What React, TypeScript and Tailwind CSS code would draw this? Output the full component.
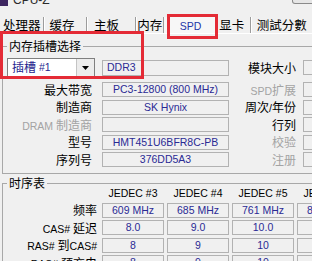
import React from "react";

const CJK = /([\u3400-\u9fff\uf900-\ufaff]+)/;

function Mixed({ text, big = false }: { text: string; big?: boolean }) {
  const parts = text.split(CJK).filter((p) => p.length > 0);
  return (
    <>
      {parts.map((p, i) =>
        /[\u3400-\u9fff\uf900-\ufaff]/.test(p) ? (
          <span key={i} className={big ? "text-[12.5px]" : "text-[12px]"}>
            {p}
          </span>
        ) : (
          <span key={i} className="text-[10.5px]">
            {p}
          </span>
        )
      )}
    </>
  );
}

function Field({ text = "", className = "" }: { text?: string; className?: string }) {
  return (
    <div
      className={
        "h-[15px] border border-[#b2b2b2] flex items-center justify-center text-[#2a2a94] whitespace-nowrap overflow-hidden " +
        className
      }
    >
      <Mixed text={text} />
    </div>
  );
}

function Label({ text, gray = false, className = "" }: { text: string; gray?: boolean; className?: string }) {
  return (
    <div
      className={
        "text-right whitespace-nowrap " + (gray ? "text-[#a3a3a3] " : "text-black ") + className
      }
    >
      <Mixed text={text} />
    </div>
  );
}

const tabs = [
  { t: "处理器", c: "w-[45px] pl-[3px] border-r border-[#9c9c9c]" },
  { t: "缓存", c: "w-[43px] pl-[5px] border-r border-[#9c9c9c]" },
  { t: "主板", c: "w-[50px] pl-[7px] border-r border-[#9c9c9c]" },
  { t: "内存", c: "w-[28px] pl-[1px] border-r border-[#9c9c9c]" },
  { t: "SPD", c: "w-[54px] justify-center text-[#2436a8] bg-[#f7f7f7]" },
  { t: "显卡", c: "w-[34px] pl-[2px] border-r border-[#9c9c9c]" },
  { t: "测試分數", c: "w-[62px] pl-[6px]" },
];

const rows: [string, boolean, string, string, boolean][] = [
  ["最大带宽", false, "PC3-12800 (800 MHz)", "SPD扩展", true],
  ["制造商", false, "SK Hynix", "周次/年份", false],
  ["DRAM 制造商", true, "", "行列", false],
  ["型号", false, "HMT451U6BFR8C-PB", "校验", true],
  ["序列号", false, "376DD5A3", "注册", true],
];

const timings: [string, string[]][] = [
  ["频率", ["609 MHz", "685 MHz", "761 MHz", "838 MHz"]],
  ["CAS# 延迟", ["8.0", "9.0", "10.0", "11.0"]],
  ["RAS# 到CAS#", ["8", "9", "10", "11"]],
  ["RAS# 预充电", ["8", "9", "10", "11"]],
];

export default function App() {
  return (
    <div className="relative w-[312px] h-[261px] overflow-hidden bg-[#f0f0f0] font-['Liberation_Sans','Noto_Sans_CJK_SC',sans-serif] text-black leading-none">
      {/* title strip */}
      <div className="h-[10px] overflow-hidden flex items-start">
        <div className="-mt-[6px] flex items-center gap-[5px] h-[12px]">
          <div className="w-[8px] h-[12px] bg-[#3d2660]" />
          <span className="text-[12px] text-[#2a2a2a]">CPU-Z</span>
        </div>
        <div className="ml-auto -mr-[4px] w-[24px] h-[4px] border border-t-0 border-[#8a8a8a] rounded-b-[3px] bg-[#e6e6e6]" />
      </div>

      {/* tabs */}
      <div className="h-[24px] flex items-end border-b border-white">
        {tabs.map((tab) => (
          <div key={tab.t} className={"h-[16px] pt-[2px] flex items-center shadow-[1px_0_0_#ffffff] " + tab.c}>
            <Mixed text={tab.t} big />
          </div>
        ))}
      </div>

      {/* upper group */}
      <fieldset className="ml-[2px] mt-[5px] w-[360px] border border-[#a8a8a8] pb-[4.75px]">
        <legend className="ml-[4px] px-[2px] leading-[14px]">
          <Mixed text="内存插槽选择" />
        </legend>
        <div className="flex items-center h-[19px] mt-[4px]">
          <div className="ml-[4px] w-[88px] h-[19px] bg-white border border-[#7f7f7f] flex items-center">
            <div className="pl-[4px] flex-1 text-[#1f1f8f] whitespace-nowrap flex items-center gap-[3px]">
              <Mixed text="插槽" />
              <span className="text-[10.5px]">#1</span>
            </div>
            <div className="w-[18px] h-[17px] bg-[#ececec] border-l border-[#c4c4c4] flex items-center justify-center">
              <svg width="7" height="4" viewBox="0 0 7 4">
                <path d="M0 0h7L3.5 4z" fill="#000" />
              </svg>
            </div>
          </div>
          <Field text="DDR3" className="ml-[7px] w-[127px] h-[16px] justify-start pl-[4px]" />
          <Label text="模块大小" className="w-[67px]" />
          <Field className="ml-[7px] w-[40px]" />
        </div>
        <div className="mt-[3.75px] flex flex-col">
          {rows.map(([l, g, v, r, rg]) => (
            <div key={l} className="flex items-center h-[17.5px]">
              <Label text={l} gray={g} className="w-[89px]" />
              <Field text={v} className="ml-[10px] w-[127px]" />
              <Label text={r} gray={rg} className="w-[67px]" />
              <Field className="ml-[7px] w-[40px]" />
            </div>
          ))}
        </div>
      </fieldset>

      {/* timings group */}
      <fieldset className="ml-[2px] mt-[2px] w-[360px] border border-[#a8a8a8] pb-[4px]">
        <legend className="ml-[4px] px-[2px] leading-[14px]">
          <Mixed text="时序表" />
        </legend>
        <div className="-mt-[4px] h-[12px] flex items-center">
          <div className="w-[94px]" />
          <div className="ml-[5px] flex gap-[3px]">
            {["JEDEC #3", "JEDEC #4", "JEDEC #5", "JEDEC #6"].map((h) => (
              <div key={h} className="w-[62px] text-center text-[10.5px] whitespace-nowrap">
                {h}
              </div>
            ))}
          </div>
        </div>
        <div className="mt-[2.25px] flex flex-col">
          {timings.map(([l, vals]) => (
            <div key={l} className="flex items-center h-[17.5px]">
              <Label text={l} className="w-[94px]" />
              <div className="ml-[5px] flex gap-[3px]">
                {vals.map((v, i) => (
                  <Field key={i} text={v} className="w-[62px]" />
                ))}
              </div>
            </div>
          ))}
        </div>
      </fieldset>

      {/* red annotation boxes */}
      <div className="absolute left-[0px] top-[31px] w-[144px] h-[48px] border-[3px] border-[#e42b36]" />
      <div className="absolute left-[167px] top-[14px] w-[51px] h-[25px] border-[3px] border-[#e42b36]" />
    </div>
  );
}
